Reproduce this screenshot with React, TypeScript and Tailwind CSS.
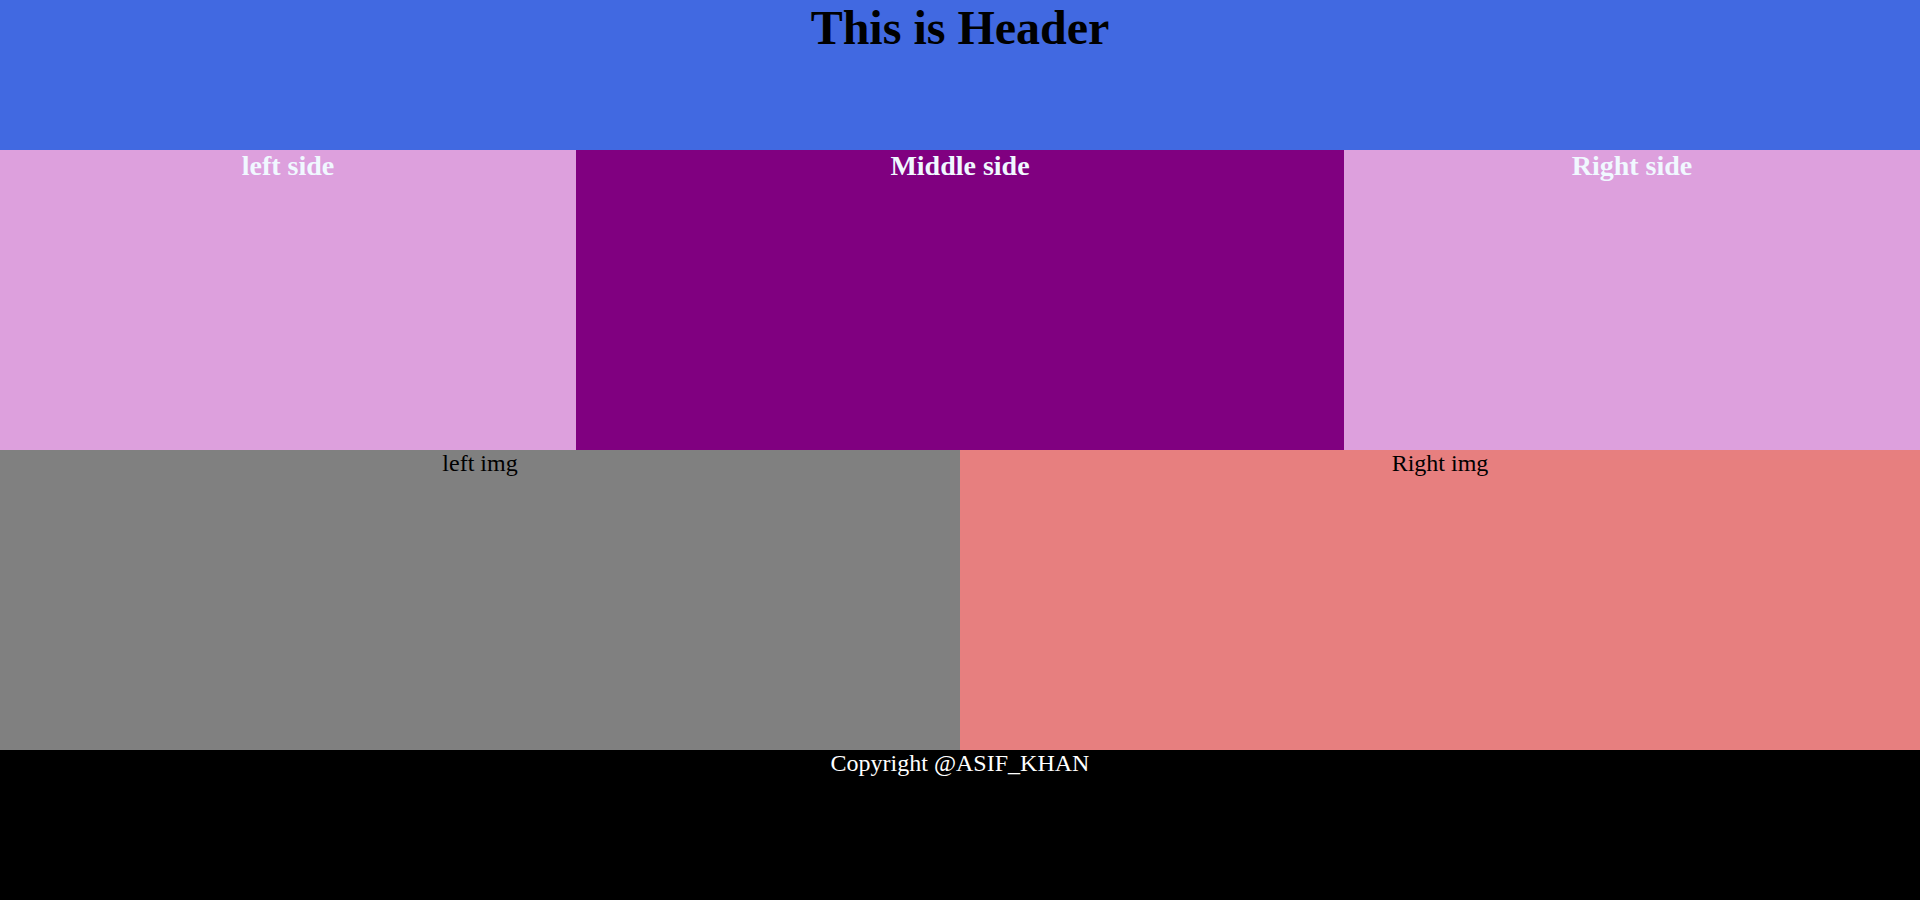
export default function App() {
  return (
    <div className="flex flex-col w-full font-['Liberation_Serif',serif] text-center">
      {/* header */}
      <header className="h-[150px] bg-[#4169e1]">
        <h1 className="m-0 text-[48px] font-bold leading-[normal] text-black">This is Header</h1>
      </header>

      {/* three columns */}
      <section className="grid grid-cols-[3fr_4fr_3fr] h-[300px]">
        <div className="bg-[#dda0dd]">
          <h2 className="text-[28px] font-bold leading-[normal] text-[#f0f8ff]">left side</h2>
        </div>
        <div className="bg-[#800080]">
          <h2 className="text-[28px] font-bold leading-[normal] text-[#f0f8ff]">Middle side</h2>
        </div>
        <div className="bg-[#dda0dd]">
          <h2 className="text-[28px] font-bold leading-[normal] text-[#f0f8ff]">Right side</h2>
        </div>
      </section>

      {/* images row */}
      <section className="grid grid-cols-2 h-[300px]">
        <div className="bg-[#808080] text-[24px] leading-[normal] text-black">left img</div>
        <div className="bg-[#e77f7f] text-[24px] leading-[normal] text-black">Right img</div>
      </section>

      <footer className="h-[150px] bg-black text-[24px] leading-[normal] text-white">
        Copyright @ASIF_KHAN
      </footer>
    </div>
  )
}
